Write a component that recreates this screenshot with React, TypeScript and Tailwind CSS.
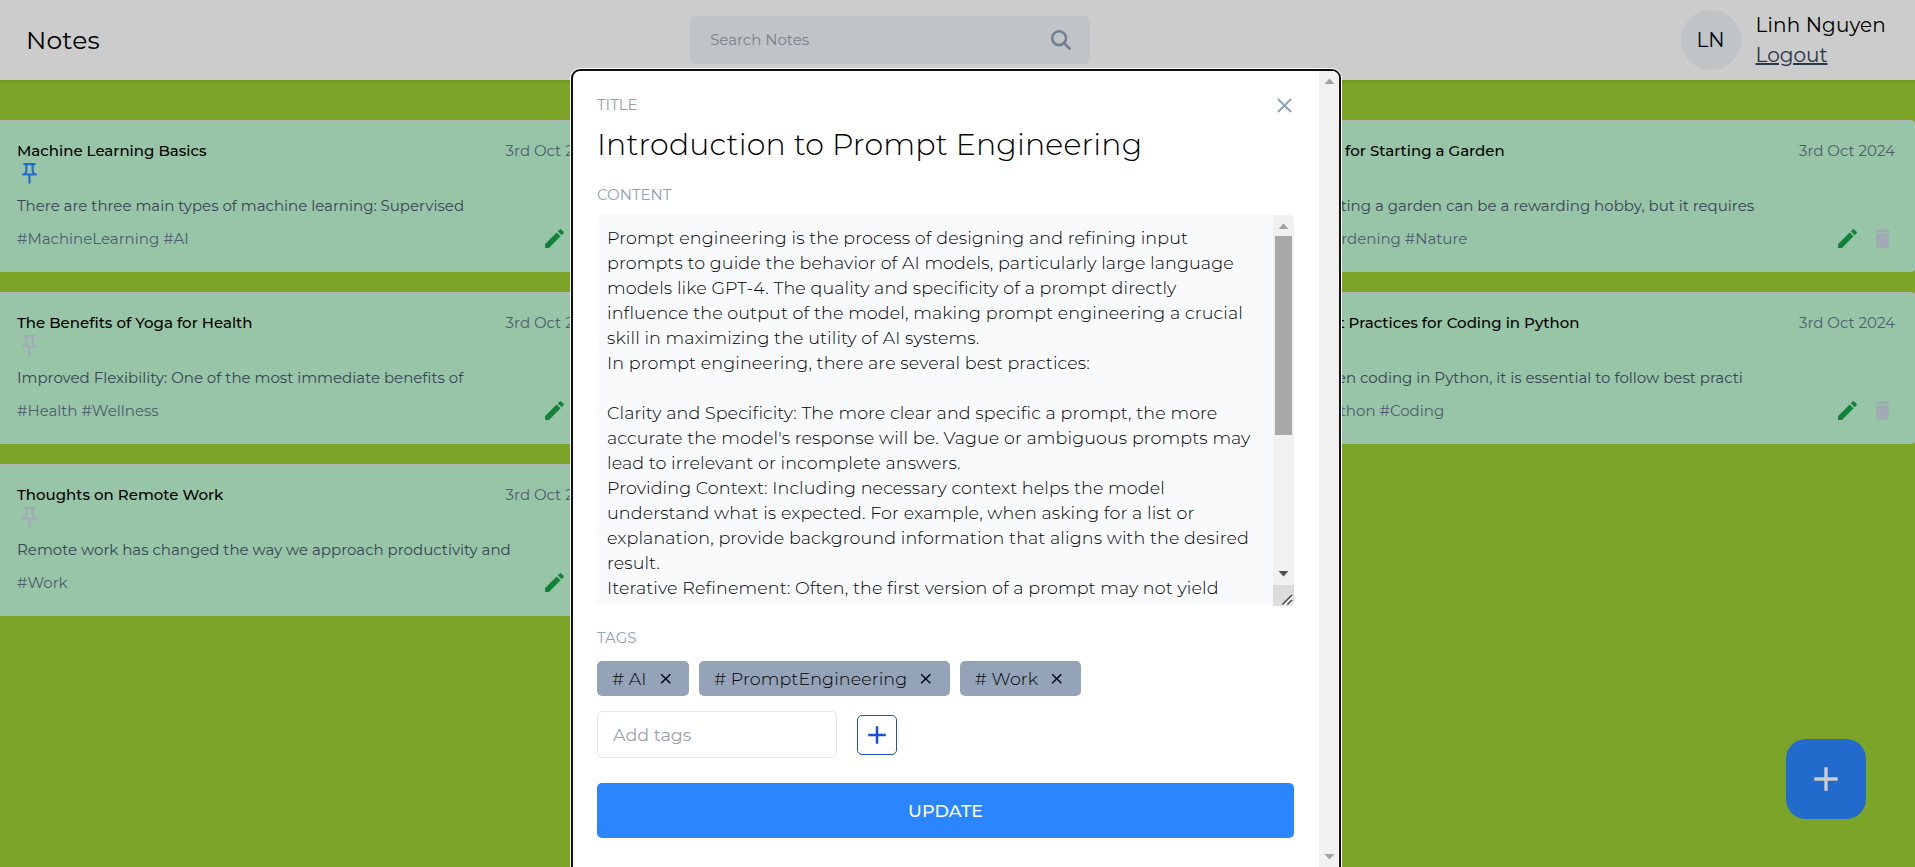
import { FaMagnifyingGlass } from "react-icons/fa6";
import { MdAdd, MdClose, MdCreate, MdDelete, MdOutlinePushPin } from "react-icons/md";

type Note = {
  title: string;
  date: string;
  content: string;
  tags: string[];
  pinned: boolean;
  lastColumn?: boolean;
};

const notes: Note[] = [
  {
    title: "Machine Learning Basics",
    date: "3rd Oct 2024",
    content: "There are three main types of machine learning: Supervised",
    tags: ["MachineLearning", "AI"],
    pinned: true,
  },
  {
    title: "Tips for Starting a Garden",
    date: "3rd Oct 2024",
    content: "Starting a garden can be a rewarding hobby, but it requires",
    tags: ["Gardening", "Nature"],
    pinned: false,
    lastColumn: true,
  },
  {
    title: "The Benefits of Yoga for Health",
    date: "3rd Oct 2024",
    content: "Improved Flexibility: One of the most immediate benefits of",
    tags: ["Health", "Wellness"],
    pinned: false,
  },
  {
    title: "Best Practices for Coding in Python",
    date: "3rd Oct 2024",
    content: "When coding in Python, it is essential to follow best practi",
    tags: ["Python", "Coding"],
    pinned: false,
    lastColumn: true,
  },
  {
    title: "Thoughts on Remote Work",
    date: "3rd Oct 2024",
    content: "Remote work has changed the way we approach productivity and",
    tags: ["Work"],
    pinned: false,
  },
];

const contentLines = [
  "Prompt engineering is the process of designing and refining input",
  "prompts to guide the behavior of AI models, particularly large language",
  "models like GPT-4. The quality and specificity of a prompt directly",
  "influence the output of the model, making prompt engineering a crucial",
  "skill in maximizing the utility of AI systems.",
  "In prompt engineering, there are several best practices:",
  "",
  "Clarity and Specificity: The more clear and specific a prompt, the more",
  "accurate the model's response will be. Vague or ambiguous prompts may",
  "lead to irrelevant or incomplete answers.",
  "Providing Context: Including necessary context helps the model",
  "understand what is expected. For example, when asking for a list or",
  "explanation, provide background information that aligns with the desired",
  "result.",
  "Iterative Refinement: Often, the first version of a prompt may not yield",
];

function Header() {
  return (
    <header className="flex h-20 items-center justify-between bg-white px-[30px] shadow-[0_1px_3px_rgba(0,0,0,0.14)]">
      <h2 className="text-[25px] leading-[35px] tracking-[0.006em] text-black">Notes</h2>
      <div className="flex h-12 w-[400px] items-center justify-between rounded-[7px] bg-slate-100 px-5">
        <span className="text-[15px] leading-5 text-gray-400">Search Notes</span>
        <FaMagnifyingGlass className="-mr-px size-5 text-slate-400" />
      </div>
      <div className="flex items-center gap-[15px]">
        <div className="flex size-[60px] items-center justify-center rounded-full bg-slate-100 text-xl leading-[30px] text-slate-950">
          LN
        </div>
        <div className="text-xl leading-[30px]">
          <p className="tracking-[0.007em] text-black">Linh Nguyen</p>
          <button className="block text-slate-700 underline">Logout</button>
        </div>
      </div>
    </header>
  );
}

function NoteCard({ note }: { note: Note }) {
  return (
    <article
      className={`h-[152px] rounded-[5px] border border-gray-200 bg-[#bef7d1] p-5 text-[15px] leading-5 ${
        note.lastColumn ? "col-start-3" : "col-start-1"
      }`}
    >
      <div className="flex justify-between">
        <h6 className="font-medium text-black">{note.title}</h6>
        <span className="text-slate-500">{note.date}</span>
      </div>
      <MdOutlinePushPin
        className={`size-[25px] ${note.pinned ? "text-[#2b85ff]" : "text-slate-300"}`}
      />
      <p className="mt-2.5 text-slate-600">{note.content}</p>
      <div className="mt-2.5 flex items-center justify-between">
        <span className="text-slate-500">{note.tags.map((tag) => `#${tag}`).join(" ")}</span>
        <div className="flex gap-2.5">
          <MdCreate className="size-[25px] text-[#16a34a]" />
          <MdDelete className="size-[25px] text-slate-300" />
        </div>
      </div>
    </article>
  );
}

function Arrow({ down = false, dark = false }: { down?: boolean; dark?: boolean }) {
  return (
    <svg
      viewBox="0 0 21 21"
      className={`size-[21px] shrink-0 ${dark ? "text-[#505050]" : "text-[#a3a3a3]"}`}
      fill="currentColor"
    >
      <path d={down ? "M5.5 7h10l-5 5.5z" : "M5.5 14h10l-5-5.5z"} />
    </svg>
  );
}

function ContentField() {
  return (
    <div className="mt-2.5 flex h-[391px] overflow-hidden rounded-[5px] bg-slate-50">
      <div className="flex-1 overflow-hidden p-2.5 text-[17.5px] leading-[25px] font-light tracking-[0.0063em] whitespace-pre text-black">
        {contentLines.join("\n")}
      </div>
      <div className="flex w-[21px] flex-col items-center bg-[#f1f1f1]">
        <Arrow />
        <div className="h-[199px] w-[17px] bg-[#a8a8a8]" />
        <div className="flex-1" />
        <Arrow down dark />
        <svg viewBox="0 0 21 21" className="size-[21px] shrink-0 bg-[#dcdcdc]" fill="none">
          <path d="M10.5 20.5l9-9M15.5 20.5l4-4" stroke="#fff" strokeWidth="1.5" />
          <path d="M9.5 19.5l9.5-9.5M14.5 19.5l4.5-4.5" stroke="#505050" strokeWidth="1.75" />
        </svg>
      </div>
    </div>
  );
}

function Label({ children, className = "" }: { children: string; className?: string }) {
  return (
    <label className={`block text-[15px] leading-5 text-slate-400 ${className}`}>{children}</label>
  );
}

function EditDialog() {
  return (
    <div className="mt-[69px] ml-[571px] flex h-[810px] w-[770px] overflow-hidden rounded-[9px] border-2 border-[#101010] bg-white shadow-[0_0_0_1px_#fff]">
      <div className="flex-1 pt-6 pr-[25px] pl-6">
        <div className="flex h-5 items-center justify-between">
          <Label>TITLE</Label>
          <MdClose className="-mr-[3px] size-[25px] text-slate-400" />
        </div>
        <p className="mt-2.5 text-3xl leading-10 font-light tracking-[0.006em] text-black">
          Introduction to Prompt Engineering
        </p>
        <Label className="mt-5">CONTENT</Label>
        <ContentField />
        <Label className="mt-[22px]">TAGS</Label>
        <div className="mt-[13px] flex gap-2.5 text-[17.5px] leading-[25px] text-black">
          {["AI", "PromptEngineering", "Work"].map((tag) => (
            <span
              key={tag}
              className="flex items-center gap-2.5 rounded-[5px] bg-[#94a3b8] px-[15px] py-[5px] font-light tracking-[0.006em]"
            >
              # {tag}
              <MdClose className="size-[17.5px] text-slate-950" />
            </span>
          ))}
        </div>
        <div className="mt-[15px] flex items-center gap-5">
          <div className="w-60 rounded-[5px] border border-gray-200 px-[15px] py-2.5 text-[17.5px] leading-[25px] text-[#9ca3af]">
            Add tags
          </div>
          <button className="flex size-10 items-center justify-center rounded-[5px] border border-[#1d4ed8] text-[#1d4ed8]">
            <MdAdd className="size-[30px]" />
          </button>
        </div>
        <button className="mt-[25px] h-[55px] w-full rounded-[5px] bg-[#2b85ff] text-[17.5px] leading-[25px] font-medium text-white">
          UPDATE
        </button>
      </div>
      <div className="flex w-5 flex-col items-start justify-between overflow-hidden bg-[#f1f1f1] pb-[9px]">
        <div className="-mt-px">
          <Arrow />
        </div>
        <Arrow down />
      </div>
    </div>
  );
}

export default function App() {
  return (
    <div className="relative h-screen overflow-hidden bg-[#9acd32] font-['Montserrat','Inter',sans-serif]">
      <div className="-ml-1 w-[1920px]">
        <Header />
        <main className="mt-10 grid grid-cols-3 gap-5">
          {notes.map((note) => (
            <NoteCard key={note.title} note={note} />
          ))}
        </main>
      </div>
      <button className="absolute right-[49px] bottom-12 flex size-20 items-center justify-center rounded-[20px] bg-[#2b85ff]">
        <MdAdd className="size-10 text-white" />
      </button>
      <div className="absolute inset-0 overflow-hidden bg-black/20">
        <EditDialog />
      </div>
    </div>
  );
}
